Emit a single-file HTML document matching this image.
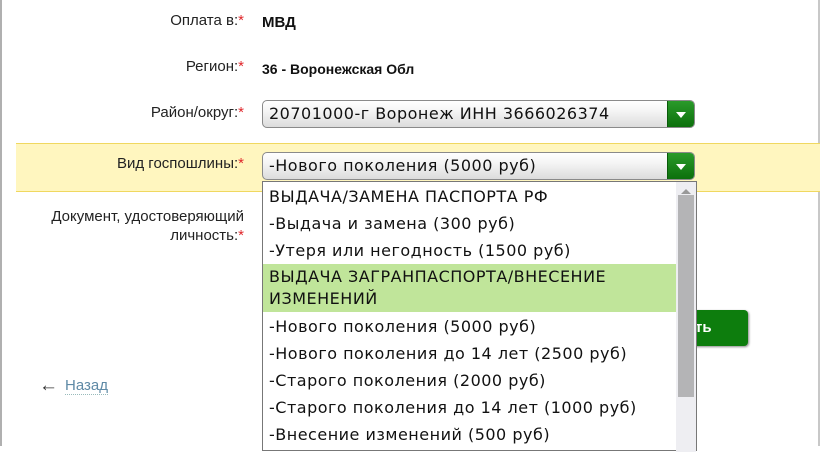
<!DOCTYPE html>
<html><head><meta charset="utf-8"><style>
body{margin:0;width:820px;height:446px;overflow:hidden;background:#fff;position:relative;font-family:"Liberation Sans",Arial,sans-serif;}
.a{position:absolute;}
.lbl{position:absolute;right:576px;font-size:15px;color:#222;text-align:right;white-space:nowrap}
.st{color:#e0262a}
.val{position:absolute;left:262px;font-size:15px;font-weight:bold;color:#111}
.sel{position:absolute;left:262px;width:433px;height:28px;border:1px solid #8a8a8a;border-radius:5px;background:linear-gradient(#fff,#f4f4f4 40%,#dcdcdc);box-sizing:border-box;font-family:"DejaVu Sans",Verdana,sans-serif;font-size:16px;letter-spacing:.5px;color:#111;line-height:26px;padding-left:6px;overflow:hidden}
.btn{position:absolute;right:0;top:0;width:26px;height:27px;background:linear-gradient(#2a9a2a,#0b6e0b);border-left:1px solid #0a5a0a}
.btn:after{content:"";position:absolute;left:8px;top:11px;border-left:5px solid transparent;border-right:5px solid transparent;border-top:6px solid #fff}
.list{position:absolute;left:262px;top:181px;width:435px;height:270px;border:1px solid #777;box-sizing:border-box;background:#fff;font-family:"DejaVu Sans",Verdana,sans-serif;font-size:16px;letter-spacing:.5px;color:#111}
.it{position:absolute;left:0;width:413px;padding-left:6px;box-sizing:border-box;height:27px;line-height:27px;white-space:nowrap}
</style></head><body>
<div class="a" style="left:0;top:0;width:2px;height:446px;background:#b0b0b0"></div>
<div class="a" style="right:0;top:0;width:2px;height:446px;background:#c8c8c8"></div>
<div class="a" style="left:16px;top:143px;width:804px;height:47px;background:#fff6bf;border-top:1px solid #f0d860;border-bottom:1px solid #f0d860"></div>

<div class="lbl" style="top:12px">Оплата в:<span class="st">*</span></div>
<div class="val" style="top:14px">МВД</div>
<div class="lbl" style="top:58px">Регион:<span class="st">*</span></div>
<div class="val" style="top:61px;font-size:14px">36 - Воронежская Обл</div>
<div class="lbl" style="top:104px">Район/округ:<span class="st">*</span></div>
<div class="sel" style="top:100px">20701000-г Воронеж ИНН 3666026374<div class="btn"></div></div>
<div class="lbl" style="top:155px">Вид госпошлины:<span class="st">*</span></div>
<div class="sel" style="top:152px">-Нового поколения (5000 руб)<div class="btn"></div></div>
<div class="lbl" style="top:207px;line-height:19px">Документ, удостоверяющий<br>личность:<span class="st">*</span></div>

<div class="a" style="left:690px;top:310px;width:58px;height:36px;background:#0d7d0d;border-radius:4px;box-shadow:1px 1px 2px #888;color:#fff;font-weight:bold;font-size:15px;line-height:36px;padding-left:5px;box-sizing:border-box">ть</div>

<div class="a" style="left:39px;top:375px;font-size:19px;color:#333">&larr;</div>
<div class="a" style="left:65px;top:377px;font-size:15px;color:#5f8aa6;border-bottom:1px dotted #9bb">Назад</div>

<div class="list">
<div class="it" style="top:1px">ВЫДАЧА/ЗАМЕНА ПАСПОРТА РФ</div>
<div class="it" style="top:28px">-Выдача и замена (300 руб)</div>
<div class="it" style="top:55px">-Утеря или негодность (1500 руб)</div>
<div class="it" style="top:82px;height:48px;line-height:22px;padding-top:2px;background:#c0e59a">ВЫДАЧА ЗАГРАНПАСПОРТА/ВНЕСЕНИЕ<br>ИЗМЕНЕНИЙ</div>
<div class="it" style="top:131px">-Нового поколения (5000 руб)</div>
<div class="it" style="top:158px">-Нового поколения до 14 лет (2500 руб)</div>
<div class="it" style="top:185px">-Старого поколения (2000 руб)</div>
<div class="it" style="top:212px">-Старого поколения до 14 лет (1000 руб)</div>
<div class="it" style="top:239px">-Внесение изменений (500 руб)</div>
<div class="a" style="left:413px;top:0;width:20px;height:270px;background:#eeeef2"></div>
<div class="a" style="left:418px;top:7px;border-left:5px solid transparent;border-right:5px solid transparent;border-bottom:5px solid #999"></div>
<div class="a" style="left:415px;top:13px;width:16px;height:202px;background:#b4b4b6"></div>
</div>
</body></html>
